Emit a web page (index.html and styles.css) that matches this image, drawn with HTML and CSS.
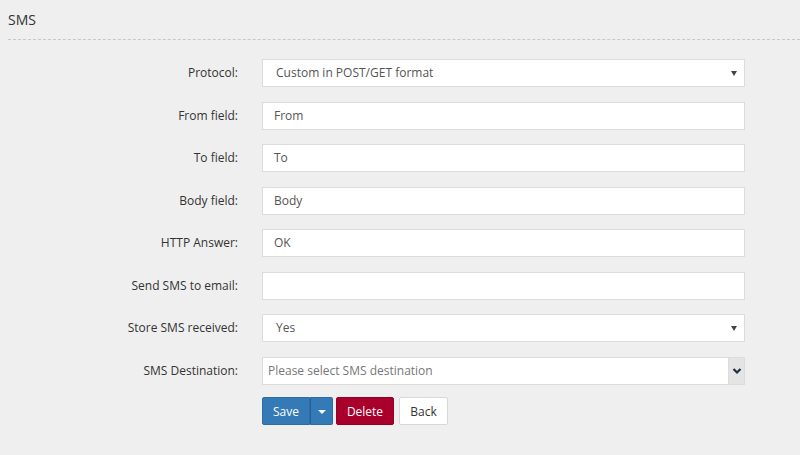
FILE: index.html
```html
<!DOCTYPE html>
<html lang="en">
<head>
    <meta charset="UTF-8">
    <title>SMS</title>
    <link rel="stylesheet" href="styles.css">
</head>
<body>
    <div class="page">
        <h2 class="title">SMS</h2>
        <form class="form">
            <label class="lbl">Protocol:</label>
            <div class="select">
                <span class="val">Custom in POST/GET format</span>
                <span class="arrow"></span>
            </div>

            <label class="lbl">From field:</label>
            <div class="input">From</div>

            <label class="lbl">To field:</label>
            <div class="input">To</div>

            <label class="lbl">Body field:</label>
            <div class="input">Body</div>

            <label class="lbl">HTTP Answer:</label>
            <div class="input">OK</div>

            <label class="lbl">Send SMS to email:</label>
            <div class="input"></div>

            <label class="lbl">Store SMS received:</label>
            <div class="select">
                <span class="val">Yes</span>
                <span class="arrow"></span>
            </div>

            <label class="lbl">SMS Destination:</label>
            <div class="combo">
                <span class="placeholder">Please select SMS destination</span>
                <span class="combo-btn">
                    <svg width="10" height="8" viewBox="0 0 10 8"><path d="M1.5 2 L5 5.5 L8.5 2" fill="none" stroke="#1f2d3d" stroke-width="2.2"/></svg>
                </span>
            </div>

            <div></div>
            <div class="actions">
                <div class="btn-group">
                    <button type="button" class="btn btn-primary">Save</button>
                    <button type="button" class="btn btn-primary caret-btn"><span class="caret"></span></button>
                </div>
                <button type="button" class="btn btn-danger">Delete</button>
                <button type="button" class="btn btn-default">Back</button>
            </div>
        </form>
    </div>
</body>
</html>
```

FILE: styles.css
```css
* {
    box-sizing: border-box;
    margin: 0;
    padding: 0;
}

body {
    font-family: 'Open Sans', 'Noto Sans', sans-serif;
    font-size: 12px;
    color: #333;
    background-color: #efefef;
}

.page {
    padding: 8px 0 0 8px;
}

.title {
    font-size: 14px;
    font-weight: normal;
    line-height: 24px;
    padding-bottom: 7px;
    border-bottom: 1px dashed #c8c8c8;
}

.form {
    display: grid;
    grid-template-columns: 230px 483px;
    column-gap: 24px;
    row-gap: 14.5px;
    margin-top: 19px;
}

.lbl {
    text-align: right;
    line-height: 28px;
}

.input,
.select,
.combo {
    height: 28px;
    background: #fff;
    border: 1px solid #dcdcdc;
    line-height: 26px;
    color: #555;
}

.input {
    padding-left: 11px;
}

.select {
    display: flex;
    justify-content: space-between;
    align-items: center;
    padding: 0 7px 0 13px;
}

.arrow {
    width: 0;
    height: 0;
    border-left: 3px solid transparent;
    border-right: 3px solid transparent;
    border-top: 5px solid #444;
}

.combo {
    display: flex;
    justify-content: space-between;
}

.placeholder {
    padding-left: 5px;
    color: #777;
}

.combo-btn {
    width: 16px;
    background: #e4e4e4;
    border-left: 1px solid #dcdcdc;
    display: flex;
    align-items: center;
    justify-content: center;
}

.actions {
    display: flex;
    gap: 5px;
    margin-top: -2px;
}

.btn-group {
    display: flex;
    margin-right: -2px;
}

.btn {
    height: 28px;
    font-family: inherit;
    font-size: 12px;
    border: 1px solid transparent;
    border-radius: 2px;
    cursor: pointer;
}

.btn-primary {
    width: 48px;
    background-color: #337ab7;
    border-color: #2e6da4;
    color: #fff;
    border-radius: 2px 0 0 2px;
}

.caret-btn {
    width: 23px;
    border-left-color: #285f8f;
    border-radius: 0 2px 2px 0;
}

.caret {
    display: inline-block;
    border-left: 4px solid transparent;
    border-right: 4px solid transparent;
    border-top: 4px solid #fff;
    vertical-align: middle;
}

.btn-danger {
    width: 58px;
    background-color: #a8002a;
    border-color: #950025;
    color: #fff;
}

.btn-default {
    width: 49px;
    background-color: #fff;
    border-color: #d8d8d8;
    color: #333;
}
```
